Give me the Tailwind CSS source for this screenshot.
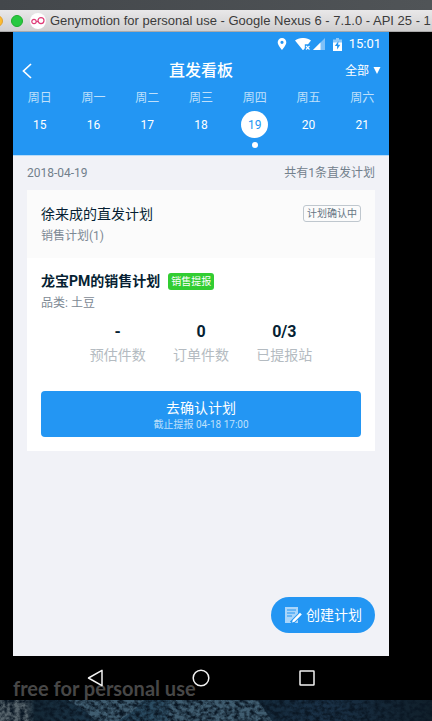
<!DOCTYPE html>
<html lang="zh-CN">
<head>
<meta charset="utf-8">
<meta name="viewport" content="width=device-width, initial-scale=1">
<title>直发看板</title>
<script src="https://cdn.jsdelivr.net/npm/@tailwindcss/browser@4"></script>
</head>
<body class="flex min-h-screen flex-col overflow-x-hidden bg-black font-['Roboto','Noto_Sans_CJK_SC',sans-serif]">

<div class="h-[10px] bg-linear-to-r from-[#43474b] to-[#505457]"></div>

<div class="flex h-[22px] items-center overflow-hidden border-b border-[#aaa9aa] bg-linear-to-b from-[#e9e8e9] to-[#d0cfd0]">
  <span class="-ml-[9px] size-3 shrink-0 rounded-full border border-[#dfa032] bg-[#fdbc2e]"></span>
  <span class="ml-2 size-3 shrink-0 rounded-full border border-[#1dad2c] bg-[#28c940]"></span>
  <svg class="ml-[7px] size-4 shrink-0" viewBox="0 0 16 16" fill="none" stroke="#df3c78" stroke-width="1.2" aria-hidden="true">
    <circle cx="8" cy="8" r="8" fill="#fff" stroke="none"/>
    <circle cx="4" cy="8.5" r="2.2"/><circle cx="11" cy="7.6" r="3"/><path d="M6.2 8.5h1.9"/>
  </svg>
  <span class="ml-1 font-['Liberation_Sans',sans-serif] text-[13px] whitespace-nowrap text-[#3b3b3b]">Genymotion for personal use - Google Nexus 6 - 7.1.0 - API 25 - 1</span>
</div>

<div class="flex flex-1 flex-col bg-black pr-[43px] pl-[13px]">
  <main class="flex flex-1 flex-col bg-[#f1f2f7]">

    <header class="border-b border-[#b9dcf8] bg-[#2396f3] text-white">
      <div class="flex h-6 items-center justify-end pr-2">
        <svg class="mr-2 h-3 w-[10px]" viewBox="0 0 10 12" aria-hidden="true"><path fill="#fff" fill-rule="evenodd" d="M5 0a4.3 4.3 0 0 0-4.3 4.3C.7 7.4 5 12 5 12s4.3-4.6 4.3-7.7A4.3 4.3 0 0 0 5 0Zm0 2.7a1.6 1.6 0 1 1 0 3.2 1.6 1.6 0 0 1 0-3.2Z"/></svg>
        <svg class="mr-[2px] h-3 w-4" viewBox="0 0 16 12" aria-hidden="true"><path fill="#fff" d="M0 2.6C4.5-.9 11.500-.9 16 2.600L13 6.300H9.800v4L8 12.300Z"/><path d="m11 8 3.500 3.500m0-3.500L11 11.500" stroke="#fff" stroke-width="1.100"/></svg>
        <svg class="mr-2 size-3" viewBox="0 0 12 12" aria-hidden="true"><path fill="#7fc1f8" d="M12 0v12H0Z"/><path fill="#fff" d="M7.500 4.500V12H0Z"/></svg>
        <svg class="mr-[7px] h-[13px] w-[9px]" viewBox="0 0 9 13" aria-hidden="true"><path fill="#8fc9f9" d="M3 0h3v1.500h3V5H0V1.500h3Z"/><path fill="#fff" d="M0 4.500h9V13H0Z"/><path fill="#2396f3" d="M5.500 3 1.800 8h2.300v3.500L7.300 6.700H5.100Z"/></svg>
        <span class="text-[13px]">15:01</span>
      </div>
      <div class="grid h-[29px] grid-cols-3 items-center pr-2 pl-2">
        <button type="button" aria-label="返回" class="justify-self-start">
          <svg class="h-4 w-3" viewBox="0 0 12 16" fill="none" stroke="#fff" stroke-width="1.700" aria-hidden="true"><path d="M10 1 2.500 8l7.500 7"/></svg>
        </button>
        <h1 class="text-center text-base font-medium">直发看板</h1>
        <button type="button" class="flex items-center gap-1 justify-self-end text-xs">全部
          <svg class="h-[7px] w-2" viewBox="0 0 8 7" aria-hidden="true"><path fill="#fff" d="M.5 0h7L4 7Z"/></svg>
        </button>
      </div>
      <nav class="grid grid-cols-7 pb-[6px] text-xs" aria-label="日期">
        <button type="button" class="flex h-16 flex-col items-center"><span class="flex h-[26px] items-center text-[#bfe0fb]">周日</span><span class="flex size-[27px] items-center justify-center">15</span></button>
        <button type="button" class="flex h-16 flex-col items-center"><span class="flex h-[26px] items-center text-[#bfe0fb]">周一</span><span class="flex size-[27px] items-center justify-center">16</span></button>
        <button type="button" class="flex h-16 flex-col items-center"><span class="flex h-[26px] items-center text-[#bfe0fb]">周二</span><span class="flex size-[27px] items-center justify-center">17</span></button>
        <button type="button" class="flex h-16 flex-col items-center"><span class="flex h-[26px] items-center text-[#bfe0fb]">周三</span><span class="flex size-[27px] items-center justify-center">18</span></button>
        <button type="button" aria-current="date" class="flex h-16 flex-col items-center"><span class="flex h-[26px] items-center text-[#bfe0fb]">周四</span><span class="flex size-[27px] items-center justify-center rounded-full bg-white text-[#2396f3]">19</span><span class="mt-1 size-[6px] rounded-full bg-white"></span></button>
        <button type="button" class="flex h-16 flex-col items-center"><span class="flex h-[26px] items-center text-[#bfe0fb]">周五</span><span class="flex size-[27px] items-center justify-center">20</span></button>
        <button type="button" class="flex h-16 flex-col items-center"><span class="flex h-[26px] items-center text-[#bfe0fb]">周六</span><span class="flex size-[27px] items-center justify-center">21</span></button>
      </nav>
    </header>

    <div class="flex h-[34px] items-center justify-between px-[14px] text-xs text-[#72808c]">
      <time datetime="2018-04-19">2018-04-19</time>
      <span>共有1条直发计划</span>
    </div>

    <article class="mx-[14px] bg-white">
      <div class="flex items-start justify-between bg-[#fbfbfb] px-[14px] pt-[13px] pb-[11px]">
        <div>
          <h2 class="text-sm/[22px] text-[#061f33]">徐来成的直发计划</h2>
          <p class="text-xs/[22px] text-[#7d8994]">销售计划(1)</p>
        </div>
        <span class="mt-[2px] rounded-[3px] border border-[#bfc7ce] px-[3px] text-[10px]/[15px] text-[#667684]">计划确认中</span>
      </div>
      <div class="px-[14px] pt-3 pb-[14px]">
        <div class="flex items-center gap-2">
          <h3 class="text-sm/[22px] font-bold text-[#061f33]">龙宝PM的销售计划</h3>
          <span class="rounded-[3px] bg-[#32cd32] px-[3px] text-[10px]/[17px] text-white">销售提报</span>
        </div>
        <p class="text-xs/[22px] text-[#7d8994]">品类: 土豆</p>
        <dl class="mx-auto mt-[6px] grid max-w-[250px] grid-cols-3 text-center">
          <div class="flex flex-col-reverse"><dt class="text-sm/[22px] text-[#b4bbc1]">预估件数</dt><dd class="text-base/6 font-bold text-[#061f33]">-</dd></div>
          <div class="flex flex-col-reverse"><dt class="text-sm/[22px] text-[#b4bbc1]">订单件数</dt><dd class="text-base/6 font-bold text-[#061f33]">0</dd></div>
          <div class="flex flex-col-reverse"><dt class="text-sm/[22px] text-[#b4bbc1]">已提报站</dt><dd class="text-base/6 font-bold text-[#061f33]">0/3</dd></div>
        </dl>
        <button type="button" class="mt-[25px] flex h-[46px] w-full flex-col items-center justify-center rounded bg-[#2396f3] pt-[3px] text-white">
          <span class="text-sm/[18px]">去确认计划</span>
          <span class="text-[10px]/[16px] text-[#bfe0fb]">截止提报 04-18 17:00</span>
        </button>
      </div>
    </article>

    <div class="mt-auto flex justify-end pr-[14px] pb-[23px]">
      <button type="button" class="flex h-9 items-center gap-1 rounded-full bg-[#2396f3] px-[13px] text-sm text-white">
        <svg class="size-[18px]" viewBox="0 0 18 18" aria-hidden="true">
          <path fill="#a9d5fa" d="M1 1h13v16H1Z"/>
          <path d="M3 4h9M3 7h8M3 10h5" stroke="#2396f3" stroke-width="1"/>
          <path d="m7.500 17 9.500-9.500" stroke="#2396f3" stroke-width="4.500"/>
          <path d="m8 16.600.8-2.600 7.200-7.200 1.800 1.800-7.200 7.200Z" fill="#fff"/>
        </svg>
        创建计划
      </button>
    </div>
  </main>

  <nav class="relative flex h-11 items-center justify-center gap-[88px]" aria-label="系统导航">
    <span class="absolute top-5 left-0 font-['Lato',sans-serif] text-xl/6 font-bold whitespace-nowrap text-[#474747]">free for personal use</span>
    <button type="button" aria-label="后退" class="relative"><svg class="size-[18px]" viewBox="0 0 18 18" fill="none" stroke="#f2f2f2" stroke-width="1.500" stroke-linejoin="round"><path d="M16 1.300v15.400L2.500 9Z"/></svg></button>
    <button type="button" aria-label="主屏幕" class="relative"><svg class="size-[18px]" viewBox="0 0 18 18" fill="none" stroke="#f2f2f2" stroke-width="1.500"><circle cx="9" cy="9" r="7.800"/></svg></button>
    <button type="button" aria-label="最近任务" class="relative"><svg class="size-[18px]" viewBox="0 0 18 18" fill="none" stroke="#f2f2f2" stroke-width="1.500"><rect x="2" y="2" width="14" height="14" rx=".5"/></svg></button>
  </nav>
</div>

<svg class="h-[21px] w-full" viewBox="0 0 432 21" preserveAspectRatio="none" aria-hidden="true">
  <defs>
    <linearGradient id="sea">
      <stop offset="0" stop-color="#48565f"/><stop offset=".06" stop-color="#4c5a63"/><stop offset=".08" stop-color="#142735"/><stop offset=".2" stop-color="#1b3447"/>
      <stop offset=".35" stop-color="#2b4c62"/><stop offset=".5" stop-color="#3b5669"/><stop offset=".6" stop-color="#14293a"/><stop offset=".75" stop-color="#1a3147"/><stop offset="1" stop-color="#101f2a"/>
    </linearGradient>
    <filter id="rock" x="0" y="0" width="100%" height="100%" color-interpolation-filters="sRGB">
      <feTurbulence type="fractalNoise" baseFrequency=".2 .25" numOctaves="4" seed="6"/>
      <feColorMatrix values="0 0 0 0 .04  0 0 0 0 .09  0 0 0 0 .14  2.500 0 0 0 -.850"/>
    </filter>
  </defs>
  <path fill="url(#sea)" d="M0 0h432v21H0Z"/>
  <path fill="#56636b" d="M0 6 12 0h12l5 21H0Z"/>
  <path fill="#405d70" d="M68 0h76l-12 12-14 9H96L84 10ZM170 0h88l14 21H168Z"/>
  <path filter="url(#rock)" d="M0 0h432v21H0Z"/>
</svg>
</body>
</html>
